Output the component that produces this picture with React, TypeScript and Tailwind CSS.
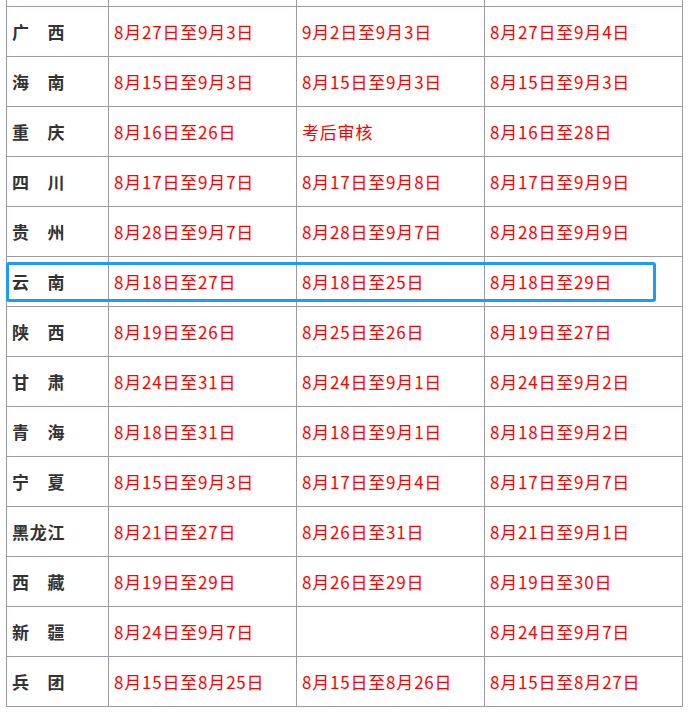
const rows: [string, string, string, string][] = [
  ['广　西', '8月27日至9月3日', '9月2日至9月3日', '8月27日至9月4日'],
  ['海　南', '8月15日至9月3日', '8月15日至9月3日', '8月15日至9月3日'],
  ['重　庆', '8月16日至26日', '考后审核', '8月16日至28日'],
  ['四　川', '8月17日至9月7日', '8月17日至9月8日', '8月17日至9月9日'],
  ['贵　州', '8月28日至9月7日', '8月28日至9月7日', '8月28日至9月9日'],
  ['云　南', '8月18日至27日', '8月18日至25日', '8月18日至29日'],
  ['陕　西', '8月19日至26日', '8月25日至26日', '8月19日至27日'],
  ['甘　肃', '8月24日至31日', '8月24日至9月1日', '8月24日至9月2日'],
  ['青　海', '8月18日至31日', '8月18日至9月1日', '8月18日至9月2日'],
  ['宁　夏', '8月15日至9月3日', '8月17日至9月4日', '8月17日至9月7日'],
  ['黑龙江', '8月21日至27日', '8月26日至31日', '8月21日至9月1日'],
  ['西　藏', '8月19日至29日', '8月26日至29日', '8月19日至30日'],
  ['新　疆', '8月24日至9月7日', '', '8月24日至9月7日'],
  ['兵　团', '8月15日至8月25日', '8月15日至8月26日', '8月15日至8月27日'],
]

const cell = 'flex items-center pl-[5px] pt-[1px] border-r border-b border-[#9a9aa8]'

export default function App() {
  return (
    <div
      className="min-h-screen bg-white text-[17px] tracking-[0.8px]"
      style={{ fontFamily: '"Noto Sans CJK SC", "Noto Sans", sans-serif' }}
    >
      <div className="relative ml-[6px] w-[677px] border-l border-[#9a9aa8]">
        {/* tail of the row above, cut off by the scroll */}
        <div className="grid grid-cols-[102px_188px_188px_198px]">
          <div className="h-[7px] border-r border-b border-[#9a9aa8]" />
          <div className="h-[7px] border-r border-b border-[#9a9aa8]" />
          <div className="h-[7px] border-r border-b border-[#9a9aa8]" />
          <div className="h-[7px] border-r border-b border-[#9a9aa8]" />
        </div>
        {rows.map(([name, a, b, c]) => (
          <div key={name} className="grid h-[50px] grid-cols-[102px_188px_188px_198px]">
            <div className={`${cell} font-bold text-[#333]`}>{name}</div>
            <div className={`${cell} text-[#ff0000]`}>{a}</div>
            <div className={`${cell} text-[#ff0000]`}>{b}</div>
            <div className={`${cell} text-[#ff0000]`}>{c}</div>
          </div>
        ))}
        {/* highlight box round the 云南 row */}
        <div className="absolute left-[-1px] top-[262px] h-[40px] w-[650px] rounded-[3px] border-[3px] border-[#1b9bfc]" />
      </div>
    </div>
  )
}
